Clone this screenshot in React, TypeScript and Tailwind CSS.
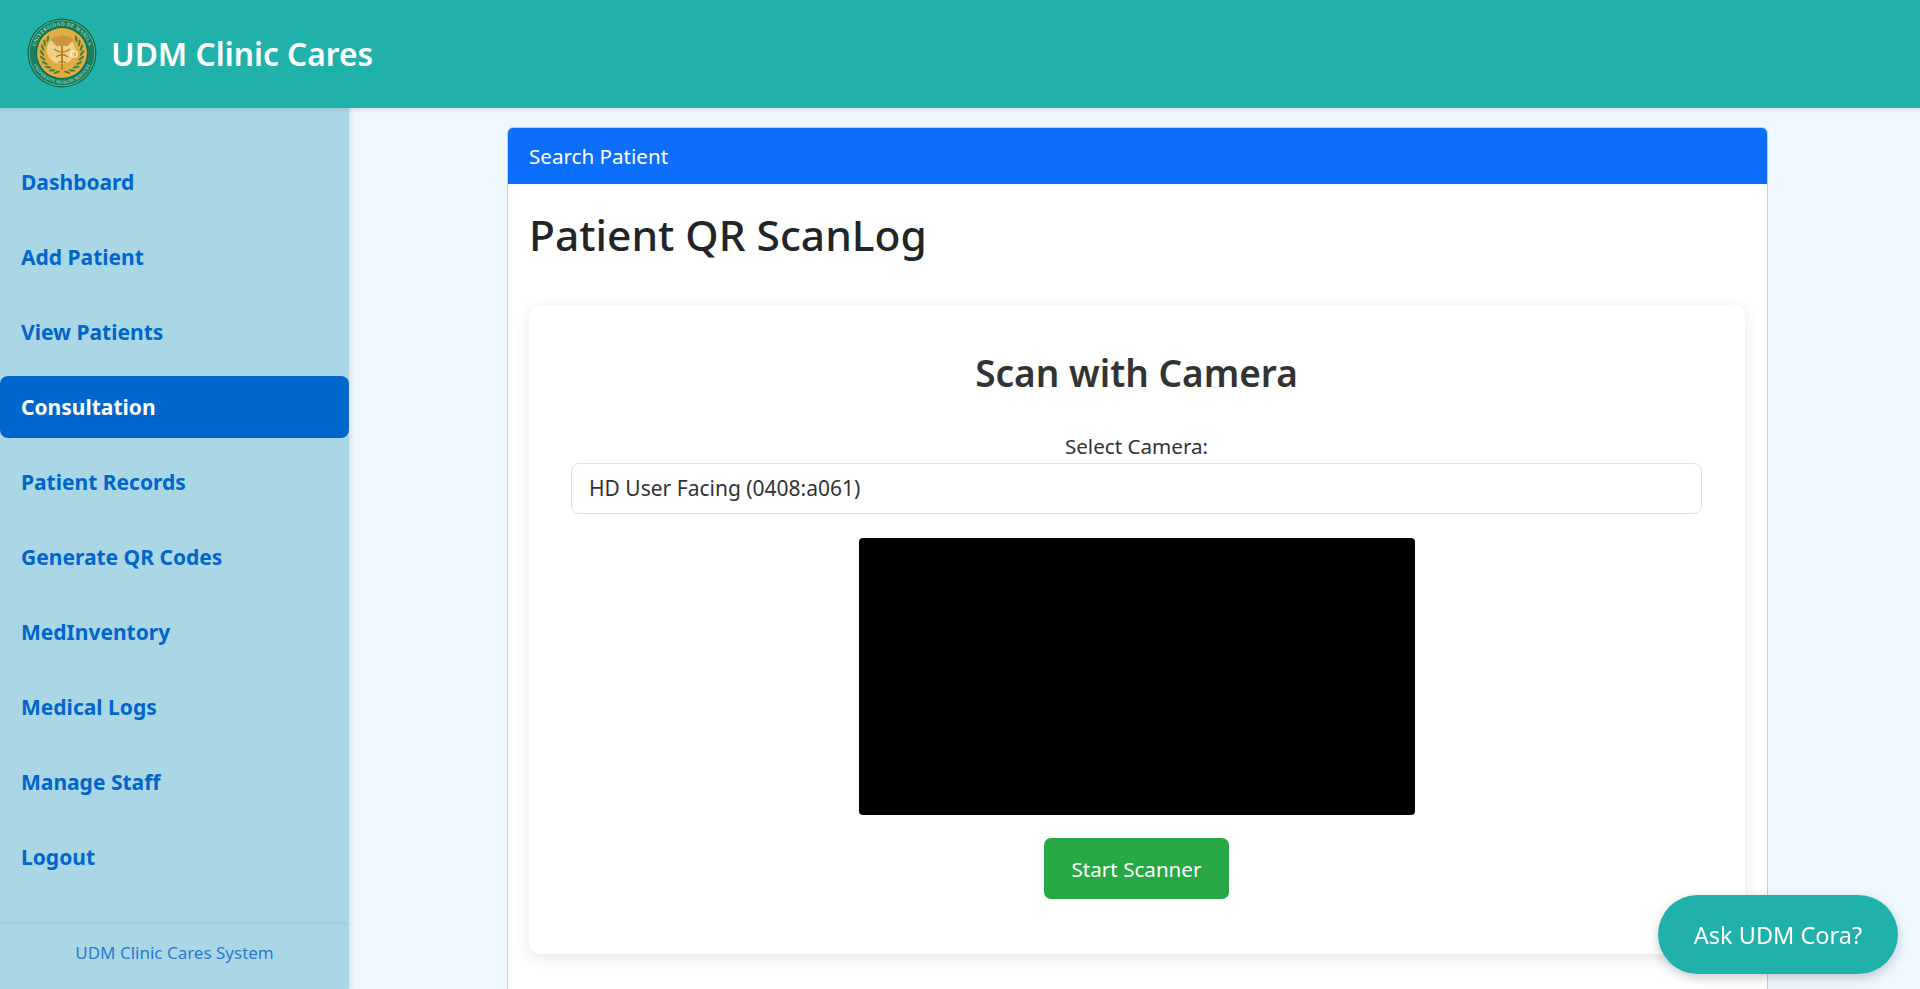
const navItems = [
  "Dashboard",
  "Add Patient",
  "View Patients",
  "Consultation",
  "Patient Records",
  "Generate QR Codes",
  "MedInventory",
  "Medical Logs",
  "Manage Staff",
  "Logout",
];

// laurel leaves climbing both sides of the gold disc
const leafAngles = [105, 120, 135, 150, 165, 180, 195, 210, 225, 75, 60, 45, 30, 15, 0, -15, -30, -45];

function Seal() {
  return (
    <svg viewBox="0 0 70 70" className="w-[70px] h-[70px] shrink-0 mb-[2px]">
      <defs>
        <path id="seal-top" d="M 7.5 35 A 27.5 27.5 0 0 1 62.5 35" />
        <path id="seal-bottom" d="M 4.5 35 A 30.5 30.5 0 0 0 65.5 35" />
      </defs>
      <circle cx="35" cy="35" r="34.5" fill="#0c6a4c" />
      <circle cx="35" cy="35" r="33.2" fill="#6fb59a" />
      <circle cx="35" cy="35" r="32.4" fill="#17805f" />
      <circle cx="35" cy="35" r="26" fill="#0c6a4c" />
      <circle cx="35" cy="35" r="25" fill="#e0ad45" />
      <circle cx="34" cy="32" r="14" fill="#f0d084" />
      <text fontSize="5" fill="#d6eee2" fontFamily="'Liberation Serif', serif" letterSpacing="0.45">
        <textPath href="#seal-top" startOffset="50%" textAnchor="middle">
          UNIVERSIDAD DE MANILA
        </textPath>
      </text>
      <text fontSize="4.4" fill="#d6eee2" fontFamily="'Liberation Serif', serif" letterSpacing="0.2">
        <textPath href="#seal-bottom" startOffset="50%" textAnchor="middle">
          UNIVERSITY HEALTH SERVICES
        </textPath>
      </text>
      {leafAngles.map((a) => {
        const x = 35 + 20 * Math.cos((a * Math.PI) / 180);
        const y = 35 + 20 * Math.sin((a * Math.PI) / 180);
        return (
          <ellipse
            key={a}
            cx={x}
            cy={y}
            rx="3.4"
            ry="1.1"
            fill="#4a7f3a"
            transform={`rotate(${a > 90 ? a + 55 : a - 55} ${x} ${y})`}
          />
        );
      })}
      <path d="M35 24v28" stroke="#b07f2e" strokeWidth="1.8" fill="none" />
      <path d="M27 31c5 4 11 4 16 0M29 39c4-3 8-3 12 0M31 45c3-2 5-2 8 0" stroke="#b07f2e" strokeWidth="1.3" fill="none" />
      <path d="M24 22c4-6 18-6 22 0l-5 6H29z" fill="#c9973c" />
      <circle cx="47" cy="36" r="3.2" fill="none" stroke="#fff3c9" strokeWidth="1.3" />
    </svg>
  );
}

export default function App() {
  return (
    <div className="h-[989px] overflow-hidden flex flex-col bg-[#f0f8ff] text-[20.6px] text-[#212529] font-['Noto_Sans',sans-serif]">
      <header className="relative z-20 h-[108px] shrink-0 bg-[#20b2aa] flex items-center pl-[27px] gap-[14px] shadow-[0_2px_4px_rgba(0,0,0,0.1)]">
        <Seal />
        <span className="text-[31.7px] font-semibold text-white">UDM Clinic Cares</span>
      </header>

      <div className="flex flex-1 min-h-0">
        <aside className="relative z-10 w-[349px] shrink-0 bg-[#aad7e6] flex flex-col shadow-[2px_0_5px_rgba(0,0,0,0.1)]">
          <nav className="flex-1 flex flex-col gap-[13px] pt-[43px]">
            {navItems.map((item) => (
              <a
                key={item}
                className={
                  item === "Consultation"
                    ? "h-[62px] flex items-center px-[21px] pt-[2px] rounded-[8px] bg-[#0066cc] text-white text-[21px] font-bold"
                    : "h-[62px] flex items-center px-[21px] pt-[2px] text-[#0066cc] text-[21px] font-bold"
                }
              >
                {item}
              </a>
            ))}
          </nav>
          <div className="h-[66px] pb-2 flex items-center justify-center border-t border-[#a0cbd9] text-[17px] text-[#2a7bd0] shadow-[0_-2px_4px_rgba(0,0,0,0.03)]">
            UDM Clinic Cares System
          </div>
        </aside>

        <main className="flex-1 min-w-0 pt-[19px] pl-[158px]">
          <section className="w-[1261px] h-[1000px] bg-white border border-[#c9ced3] rounded-t-[6px]">
            <div className="h-[56px] flex items-center px-[21px] bg-[#0d6efd] text-white rounded-t-[5px]">
              Search Patient
            </div>
            <div className="pt-[27px] pl-[21px] pr-[22px]">
              <h1 className="text-[42.5px] leading-[48px] font-medium">Patient QR ScanLog</h1>
              <div className="mt-[46px] h-[649px] rounded-[12px] bg-white shadow-[0_4px_16px_rgba(0,0,0,0.1)] pl-[42px] pr-[43px] flex flex-col items-center">
                <h2 className="mt-[46px] text-[37px] leading-[44px] font-semibold text-[#333333]">Scan with Camera</h2>
                <label className="mt-[39px] mb-[1px] leading-[24px] text-[#333333]">Select Camera:</label>
                <div className="mt-[4px] w-full h-[51px] flex items-center px-[17px] pt-px text-[21px] text-[#333333] rounded-[8px] border border-[#dee2e6] bg-white">
                  HD User Facing (0408:a061)
                </div>
                <div className="mt-[24px] w-[556px] h-[277px] bg-black rounded-[4px]" />
                <button className="mt-[23px] w-[185px] h-[61px] pt-px rounded-[7px] bg-[#28a745] text-white">Start Scanner</button>
              </div>
            </div>
          </section>
        </main>
      </div>

      <button className="fixed right-[22px] bottom-[15px] z-30 w-[240px] h-[79px] pt-[2px] rounded-full bg-[#20b2aa] text-white text-[23.5px] shadow-[0_4px_12px_rgba(0,0,0,0.2)]">
        Ask UDM Cora?
      </button>
    </div>
  );
}
